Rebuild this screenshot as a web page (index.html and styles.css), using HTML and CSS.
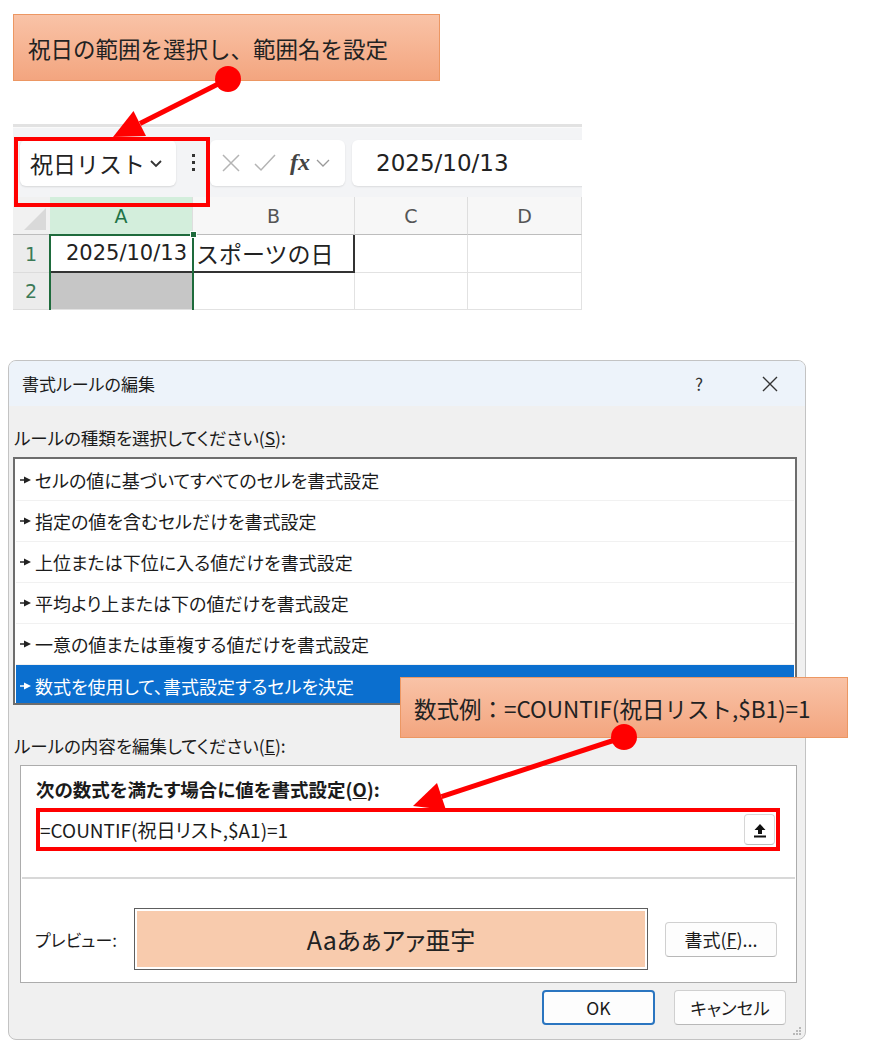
FILE: index.html
```html
<!DOCTYPE html>
<html lang="ja">
  <head>
    <meta charset="UTF-8" />
    <title>書式ルールの編集</title>
    <link rel="stylesheet" href="styles.css">
  </head>
  <body>
    <div class="page">
      <div class="callout callout-name">祝日の範囲を選択し、範囲名を設定</div>

      <!-- Excel snippet -->
      <div class="excel">
        <div class="ribbon-edge"></div>
        <div class="formula-bar">
          <div class="name-box">
            <span>祝日リスト</span>
            <svg width="14" height="10" viewBox="0 0 14 10"><polyline points="2,3 7,8 12,3" fill="none" stroke="#333" stroke-width="1.8"/></svg>
          </div>
          <div class="more-dots"><i></i><i></i><i></i></div>
          <div class="fx-box">
            <svg width="22" height="22" viewBox="0 0 22 22"><path d="M3 3L19 19M19 3L3 19" stroke="#b4b4b4" stroke-width="1.5"/></svg>
            <svg width="24" height="22" viewBox="0 0 24 22"><polyline points="2,12 8,18 22,3" fill="none" stroke="#b4b4b4" stroke-width="1.5"/></svg>
            <span class="fx">fx</span>
            <svg width="16" height="10" viewBox="0 0 16 10"><polyline points="2,2 8,8 14,2" fill="none" stroke="#999" stroke-width="1.3"/></svg>
          </div>
          <div class="formula-input">2025/10/13</div>
        </div>
        <div class="grid">
          <div class="corner"></div>
          <div class="col-head active">A</div>
          <div class="col-head">B</div>
          <div class="col-head">C</div>
          <div class="col-head">D</div>

          <div class="row-head">1</div>
          <div class="cell date">2025/10/13</div>
          <div class="cell holiday">スポーツの日</div>
          <div class="cell"></div>
          <div class="cell"></div>

          <div class="row-head">2</div>
          <div class="cell picked"></div>
          <div class="cell"></div>
          <div class="cell"></div>
          <div class="cell"></div>

          <div class="selection"><span class="handle"></span></div>
        </div>
      </div>

      <!-- Dialog -->
      <div class="dialog">
        <div class="dialog-title">
          <span class="title-text">書式ルールの編集</span>
          <span class="help">?</span>
          <svg class="close" width="18" height="18" viewBox="0 0 18 18"><path d="M2 2L16 16M16 2L2 16" stroke="#333" stroke-width="1.4"/></svg>
        </div>

        <div class="section-label">ルールの種類を選択してください(<u>S</u>):</div>
        <div class="rule-list">
          <div class="rule"><svg class="bullet" viewBox="0 0 11 8"><path d="M0 4H5" stroke="#222" stroke-width="1.5"/><polygon points="4,0.5 11,4 4,7.5" fill="#222"/></svg>セルの値に基づいてすべてのセルを書式設定</div>
          <div class="rule"><svg class="bullet" viewBox="0 0 11 8"><path d="M0 4H5" stroke="#222" stroke-width="1.5"/><polygon points="4,0.5 11,4 4,7.5" fill="#222"/></svg>指定の値を含むセルだけを書式設定</div>
          <div class="rule"><svg class="bullet" viewBox="0 0 11 8"><path d="M0 4H5" stroke="#222" stroke-width="1.5"/><polygon points="4,0.5 11,4 4,7.5" fill="#222"/></svg>上位または下位に入る値だけを書式設定</div>
          <div class="rule"><svg class="bullet" viewBox="0 0 11 8"><path d="M0 4H5" stroke="#222" stroke-width="1.5"/><polygon points="4,0.5 11,4 4,7.5" fill="#222"/></svg>平均より上または下の値だけを書式設定</div>
          <div class="rule"><svg class="bullet" viewBox="0 0 11 8"><path d="M0 4H5" stroke="#222" stroke-width="1.5"/><polygon points="4,0.5 11,4 4,7.5" fill="#222"/></svg>一意の値または重複する値だけを書式設定</div>
          <div class="rule selected"><svg class="bullet" viewBox="0 0 11 8"><path d="M0 4H5" stroke="#fff" stroke-width="1.5"/><polygon points="4,0.5 11,4 4,7.5" fill="#fff"/></svg>数式を使用して、書式設定するセルを決定</div>
        </div>

        <div class="section-label second">ルールの内容を編集してください(<u>E</u>):</div>
        <div class="rule-box">
          <div class="rule-box-label">次の数式を満たす場合に値を書式設定(<u>O</u>):</div>
          <div class="formula-field">
            <span>=COUNTIF(祝日リスト,$A1)=1</span>
            <button class="ref-btn">
              <svg width="14" height="16" viewBox="0 0 14 16"><path d="M7 2L1.5 8H5V12H9V8H12.5Z" fill="#111"/><rect x="1" y="13.5" width="12" height="2" fill="#111"/></svg>
            </button>
          </div>
          <div class="rule-sep"></div>
          <div class="preview-row">
            <span class="preview-label">プレビュー:</span>
            <div class="preview-box"><div class="preview-fill">Aaあぁアァ亜宇</div></div>
            <button class="btn format-btn">書式(<u>F</u>)...</button>
          </div>
        </div>

        <div class="dialog-footer">
          <button class="btn ok-btn">OK</button>
          <button class="btn">キャンセル</button>
        </div>
        <svg class="grip" width="10" height="10" viewBox="0 0 10 10"><g fill="#b8b8b8"><rect x="7" y="1" width="2" height="2"/><rect x="4" y="4" width="2" height="2"/><rect x="7" y="4" width="2" height="2"/><rect x="1" y="7" width="2" height="2"/><rect x="4" y="7" width="2" height="2"/><rect x="7" y="7" width="2" height="2"/></g></svg>
      </div>

      <!-- annotations -->
      <div class="red-frame frame-name"></div>
      <div class="red-frame frame-formula"></div>
      <div class="callout callout-formula">数式例：=COUNTIF(祝日リスト,$B1)=1</div>
      <svg class="arrows" width="883" height="1061" viewBox="0 0 883 1061">
        <line x1="228" y1="79" x2="140" y2="123.5" stroke="#f00" stroke-width="5"/>
        <polygon points="113,137 146,136 133.5,111" fill="#f00"/>
        <circle cx="228" cy="79" r="13" fill="#f00"/>
        <line x1="624" y1="737" x2="441.5" y2="796.6" stroke="#f00" stroke-width="5"/>
        <polygon points="413,806 446,810 437,783" fill="#f00"/>
        <circle cx="624" cy="737" r="13" fill="#f00"/>
      </svg>
    </div>
  </body>
</html>
```

FILE: styles.css
```css
* {
  box-sizing: border-box;
}

body {
  margin: 0;
  background: #fff;
  font-family: "Noto Sans CJK JP", "Noto Sans", sans-serif;
  color: #1b1b1b;
}

.page {
  position: relative;
  width: 883px;
  height: 1061px;
  padding-top: 14px;
  overflow: hidden;
}

/* callouts */
.callout {
  display: flex;
  align-items: center;
  border: 1px solid #ec9763;
  background: linear-gradient(#f9c3a7, #f3a57f);
  color: #222;
}

.callout-name {
  margin-left: 13px;
  width: 427px;
  height: 67px;
  padding-left: 14px;
  font-size: 22.5px;
}

.callout-formula {
  position: absolute;
  left: 400px;
  top: 677px;
  width: 448px;
  height: 61px;
  padding-left: 13px;
  font-size: 22.5px;
}

/* excel */
.excel {
  margin: 43px 0 0 13px;
  width: 569px;
  height: 186px;
  overflow: hidden;
  background: #f3f4f6;
}

.ribbon-edge {
  height: 4px;
  background: #e2e2e2;
  border-bottom: 1px solid #fafafa;
}

.formula-bar {
  height: 69px;
  display: flex;
  align-items: center;
  padding-left: 7px;
}

.name-box {
  width: 156px;
  height: 46px;
  background: #fff;
  border-radius: 6px;
  box-shadow: 0 1px 2px rgba(0, 0, 0, 0.12);
  display: flex;
  align-items: center;
  padding-left: 10px;
  gap: 4px;
  font-size: 23px;
  color: #222;
}

.more-dots {
  width: 34px;
  display: flex;
  flex-direction: column;
  align-items: center;
  gap: 4px;
}

.more-dots i {
  width: 3px;
  height: 3px;
  background: #333;
}

.fx-box {
  width: 135px;
  height: 46px;
  background: #fff;
  border-radius: 6px;
  box-shadow: 0 1px 2px rgba(0, 0, 0, 0.1);
  display: flex;
  align-items: center;
  padding-left: 10px;
  gap: 11px;
}

.fx-box .fx {
  font-family: "Liberation Serif", serif;
  font-style: italic;
  font-weight: bold;
  font-size: 24px;
  color: #444;
  margin-left: 2px;
  margin-right: -6px;
}

.formula-input {
  flex: 1;
  height: 46px;
  margin-left: 7px;
  margin-right: -10px;
  background: #fff;
  border-radius: 6px;
  box-shadow: 0 1px 2px rgba(0, 0, 0, 0.1);
  display: flex;
  align-items: center;
  padding-left: 24px;
  font-family: "DejaVu Sans", sans-serif;
  font-size: 23px;
  color: #222;
}

.grid {
  position: relative;
  display: grid;
  grid-template-columns: 37px 143px 162px 113px 114px;
  grid-template-rows: 38px 38px 37px;
  background: #fff;
}

.corner {
  position: relative;
  background: #f1f1f1;
  border-bottom: 1px solid #bdbdbd;
}

.corner::after {
  content: "";
  position: absolute;
  right: 4px;
  bottom: 4px;
  border-left: 22px solid transparent;
  border-bottom: 22px solid #d9d9d9;
}

.col-head {
  display: flex;
  align-items: center;
  justify-content: center;
  background: #f7f7f7;
  border-right: 1px solid #dedede;
  border-bottom: 1px solid #bdbdbd;
  font-family: "DejaVu Sans", sans-serif;
  font-size: 19px;
  color: #555;
}

.col-head.active {
  background: #d3eedc;
  color: #217346;
}

.row-head {
  display: flex;
  align-items: center;
  justify-content: center;
  background: #ececec;
  border-right: 1px solid #cfcfcf;
  border-bottom: 1px solid #dcdcdc;
  font-family: "DejaVu Sans", sans-serif;
  font-size: 19px;
  color: #3c7a58;
}

.cell {
  border-right: 1px solid #e2e2e2;
  border-bottom: 1px solid #e2e2e2;
  display: flex;
  align-items: center;
  color: #222;
}

.cell.date {
  justify-content: flex-end;
  padding-right: 5px;
  font-family: "DejaVu Sans", sans-serif;
  font-size: 21px;
  border-bottom: 2px solid #333;
}

.cell.holiday {
  padding-left: 3px;
  font-size: 23px;
  border-bottom: 2px solid #333;
  border-right: 2px solid #333;
}

.cell.picked {
  background: #c6c6c6;
}

.selection {
  position: absolute;
  left: 36px;
  top: 37px;
  width: 145px;
  height: 90px;
  border: 2px solid #1e6b3c;
}

.selection .handle {
  position: absolute;
  right: -5px;
  top: -5px;
  width: 7px;
  height: 7px;
  background: #1e6b3c;
  border: 1px solid #fff;
}

/* dialog */
.dialog {
  position: relative;
  margin: 50px 0 0 8px;
  width: 798px;
  height: 680px;
  border: 1px solid #c3c3c3;
  border-radius: 8px;
  background: #f0f0f0;
  overflow: hidden;
  font-feature-settings: "palt";
}

.dialog-title {
  height: 45px;
  background: #edf3fa;
  display: flex;
  align-items: center;
  padding-left: 13px;
  font-size: 17px;
}

.title-text {
  flex: 1;
}

.help {
  font-size: 17px;
  margin-right: 58px;
  color: #333;
}

.close {
  margin-right: 26px;
}

.section-label {
  margin: 20px 0 0 5px;
  height: 24px;
  line-height: 24px;
  font-size: 17.5px;
}

.section-label.second {
  margin-top: 29px;
}

.rule-list {
  margin: 7px 0 0 4px;
  width: 784px;
  height: 248px;
  border: 2px solid #6d6d6d;
  background: #fff;
  padding: 1px;
  overflow: hidden;
}

.rule {
  height: 41px;
  display: flex;
  align-items: center;
  padding-left: 4px;
  gap: 4px;
  border-bottom: 1px solid #f1f1f1;
  font-size: 18px;
}

.rule .bullet {
  width: 11px;
  height: 8px;
}

.rule.selected {
  background: #0b6fcf;
  color: #fff;
  border-bottom: 0;
}

.rule-box {
  margin: 7px 0 0 11px;
  width: 777px;
  height: 218px;
  border: 1px solid #acacac;
  background: #fff;
  padding: 11px 0 0 15px;
}

.rule-box-label {
  height: 24px;
  line-height: 24px;
  font-size: 18.5px;
  font-weight: bold;
}

.formula-field {
  margin: 10px 0 0 2px;
  width: 740px;
  height: 37px;
  display: flex;
  align-items: center;
  justify-content: space-between;
  padding: 0 3px 0 2px;
  font-size: 19px;
}

.ref-btn {
  width: 31px;
  height: 31px;
  border: 1px solid #d6d6d6;
  border-bottom-color: #bdbdbd;
  border-radius: 4px;
  background: #fff;
  display: flex;
  align-items: center;
  justify-content: center;
  padding: 0;
}

.rule-sep {
  margin: 29px 0 0 -14px;
  width: 773px;
  height: 2px;
  background: #d8d8d8;
}

.preview-row {
  margin: 29px 0 0 -1px;
  display: flex;
  align-items: center;
}

.preview-label {
  width: 99px;
  font-size: 17px;
}

.preview-box {
  width: 514px;
  height: 62px;
  border: 1px solid #5e5e5e;
  padding: 2px;
  background: #fff;
}

.preview-fill {
  height: 100%;
  background: #f8cbad;
  display: flex;
  align-items: center;
  justify-content: center;
  font-size: 25px;
  color: #222;
}

.btn {
  width: 112px;
  height: 35px;
  border: 1px solid #d0d0d0;
  border-bottom-color: #b8b8b8;
  border-radius: 4px;
  background: #fdfdfd;
  font-family: "Noto Sans CJK JP", sans-serif;
  font-feature-settings: "palt";
  font-size: 17.5px;
  color: #1b1b1b;
  padding: 0;
}

.format-btn {
  margin-left: 17px;
  font-size: 18px;
}

.dialog-footer {
  margin-top: 7px;
  display: flex;
  justify-content: flex-end;
  gap: 19px;
  padding-right: 19px;
}

.ok-btn {
  width: 113px;
  border: 2px solid #2a75c0;
}

.grip {
  position: absolute;
  right: 3px;
  bottom: 3px;
}

/* annotations */
.red-frame {
  position: absolute;
  border: 4px solid #f00;
}

.frame-name {
  left: 14px;
  top: 137px;
  width: 196px;
  height: 70px;
}

.frame-formula {
  left: 36px;
  top: 808px;
  width: 744px;
  height: 43px;
}

.arrows {
  position: absolute;
  left: 0;
  top: 0;
  pointer-events: none;
}
```
